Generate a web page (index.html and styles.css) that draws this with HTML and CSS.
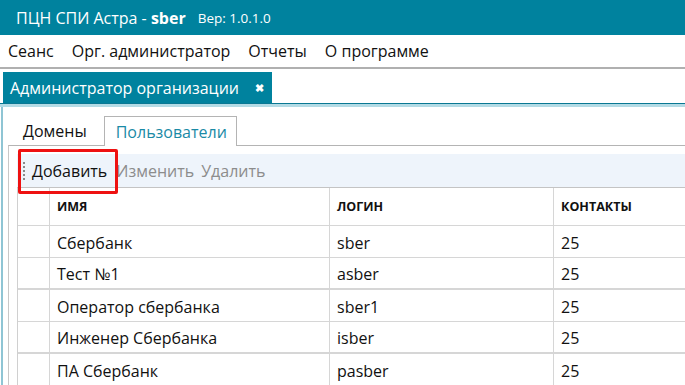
FILE: index.html
```html
<!DOCTYPE html>
<html lang="ru">
<head>
<meta charset="utf-8">
<link rel="stylesheet" href="styles.css">
</head>
<body>
<div class="app">
  <header class="titlebar">
    <span class="title">ПЦН СПИ Астра - <b>sber</b></span>
    <span class="version">Вер: 1.0.1.0</span>
  </header>
  <nav class="menubar">
    <span class="menu-item">Сеанс</span>
    <span class="menu-item">Орг. администратор</span>
    <span class="menu-item">Отчеты</span>
    <span class="menu-item">О программе</span>
  </nav>
  <div class="doc">
    <div class="doc-tabs">
      <div class="doc-tab">
        <span>Администратор организации</span>
        <span class="close">✖</span>
      </div>
    </div>
    <div class="doc-body">
      <div class="inner-tabs">
        <span class="inner-tab">Домены</span>
        <span class="inner-tab active">Пользователи</span>
      </div>
      <div class="panel">
        <div class="toolbar">
          <span class="grip"><i></i><i></i><i></i><i></i><i></i></span>
          <span class="tool primary">Добавить</span>
          <span class="tool disabled">Изменить</span>
          <span class="tool disabled">Удалить</span>
          <span class="highlight"></span>
        </div>
        <div class="grid">
          <div class="row head">
            <div class="cell rh"></div>
            <div class="cell c1">ИМЯ</div>
            <div class="cell c2">ЛОГИН</div>
            <div class="cell c3">КОНТАКТЫ</div>
          </div>
          <div class="row">
            <div class="cell rh"></div>
            <div class="cell c1">Сбербанк</div>
            <div class="cell c2">sber</div>
            <div class="cell c3">25</div>
          </div>
          <div class="row thick">
            <div class="cell rh"></div>
            <div class="cell c1">Тест №1</div>
            <div class="cell c2">asber</div>
            <div class="cell c3">25</div>
          </div>
          <div class="row">
            <div class="cell rh"></div>
            <div class="cell c1">Оператор сбербанка</div>
            <div class="cell c2">sber1</div>
            <div class="cell c3">25</div>
          </div>
          <div class="row thick">
            <div class="cell rh"></div>
            <div class="cell c1">Инженер Сбербанка</div>
            <div class="cell c2">isber</div>
            <div class="cell c3">25</div>
          </div>
          <div class="row">
            <div class="cell rh"></div>
            <div class="cell c1">ПА Сбербанк</div>
            <div class="cell c2">pasber</div>
            <div class="cell c3">25</div>
          </div>
        </div>
      </div>
    </div>
  </div>
</div>
</body>
</html>
```

FILE: styles.css
```css
* { box-sizing: border-box; }
html, body { margin: 0; padding: 0; }
body {
  width: 685px;
  height: 385px;
  overflow: hidden;
  background: #fff;
  font-family: "Open Sans", "Noto Sans", sans-serif;
  font-size: 16px;
  color: #111;
}
.app { display: flex; flex-direction: column; height: 385px; }

.titlebar {
  height: 35px;
  background: #00829e;
  color: #fff;
  display: flex;
  align-items: center;
  padding-left: 16px;
  gap: 12px;
  flex-shrink: 0;
}
.title { font-size: 16px; }
.title b { font-weight: 700; }
.version { font-size: 13.5px; }

.menubar {
  height: 34px;
  border-bottom: 2px solid #b0b0b0;
  display: flex;
  align-items: center;
  padding-left: 8px;
  gap: 18px;
  flex-shrink: 0;
}

.doc { flex: 1; display: flex; flex-direction: column; padding-top: 3px; min-height: 0; }
.doc-tabs {
  display: flex;
  border-bottom: 1px solid #0a7893;
  box-shadow: 0 3px 0 #b3dbe5;
  padding-left: 3px;
  position: relative;
  z-index: 1;
}
.doc-tab {
  height: 31px;
  background: #00829e;
  color: #fff;
  display: flex;
  align-items: center;
  padding: 0 8px 0 7px;
  gap: 16px;
}
.close { font-size: 11px; font-weight: 700; }

.doc-body {
  flex: 1;
  margin-top: 3px;
  margin-left: 1px;
  border-left: 2px solid #8fc5d4;
  padding: 9px 0 0 5px;
  display: flex;
  flex-direction: column;
  min-height: 0;
}
.inner-tabs {
  display: flex;
  align-items: flex-end;
  height: 29px;
  padding-left: 2px;
}
.inner-tab {
  padding: 0 11px 0 13px;
  height: 28px;
  display: flex;
  align-items: center;
}
.inner-tab.active {
  color: #1a8aa6;
  border: 1px solid #b4b4b4;
  border-bottom: none;
  background: #fff;
  height: 30px;
  padding: 0 9px 0 11px;
  margin-left: 6px;
  margin-bottom: -1px;
  position: relative;
}

.panel {
  flex: 1;
  border-top: 1px solid #b4b4b4;
  border-left: 1px solid #c8c8c8;
  padding: 8px 0 0 8px;
  min-height: 0;
}

.toolbar {
  position: relative;
  height: 34px;
  background: #eef4fb;
  border-bottom: 1px solid #c4c4c4;
  display: flex;
  align-items: center;
  padding-left: 6px;
}
.grip {
  display: flex;
  flex-direction: column;
  gap: 2px;
  margin-right: 7px;
}
.grip i {
  display: block;
  width: 2px;
  height: 2px;
  background: #8a8a8a;
}
.tool { margin-right: 7px; }
.tool.primary { margin-right: 9px; }
.tool.disabled { color: #8c8c8c; }
.highlight {
  position: absolute;
  left: 1px;
  top: -5px;
  width: 100px;
  height: 45px;
  border: 3px solid #ee1111;
  border-radius: 2px;
}

.grid {
  border-left: 1px solid #d0d0d0;
}
.row {
  display: flex;
  height: 32px;
  border-bottom: 1px solid #d6d6d6;
}
.row.thick { border-bottom-width: 2px; }
.row.head { height: 38px; }
.cell {
  display: flex;
  align-items: center;
  padding-left: 7px;
  padding-top: 2px;
  border-right: 1px solid #d6d6d6;
  white-space: nowrap;
}
.head .cell { font-size: 12.5px; font-weight: 700; padding-top: 0; }
.rh { width: 32px; flex-shrink: 0; }
.c1 { width: 280px; flex-shrink: 0; }
.c2 { width: 224px; flex-shrink: 0; }
.c3 { flex: 1; border-right: none; }
```
